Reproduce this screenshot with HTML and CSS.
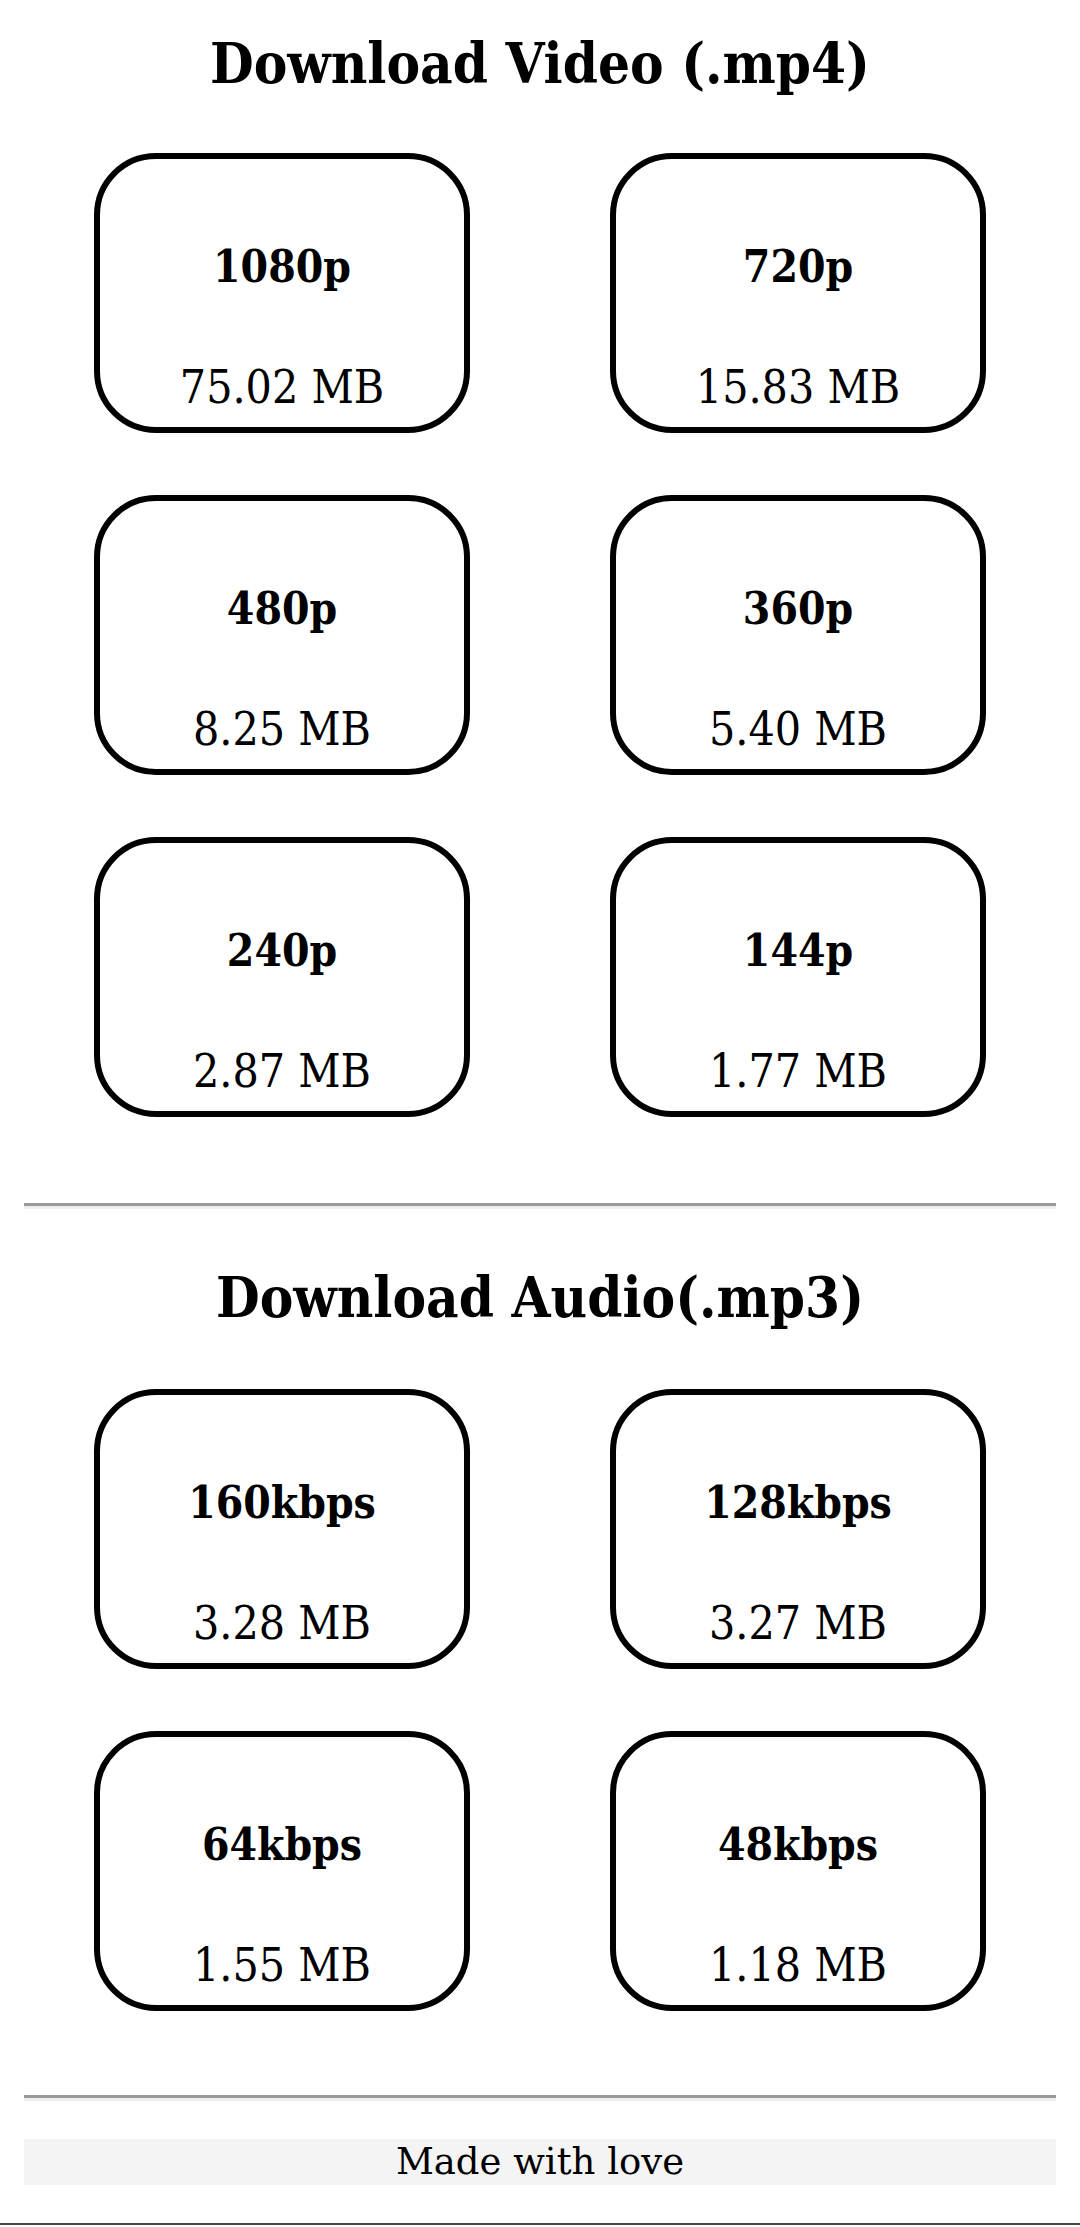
FILE: index.html
```html
<!DOCTYPE html>
<html>
<head>
<meta charset="utf-8">
<link rel="stylesheet" href="styles.css">
</head>
<body>
<section class="section section-video">
  <h2 class="title">Download Video (.mp4)</h2>
  <div class="grid">
    <div class="cell"><a class="card"><span class="label">1080p</span><span class="size">75.02 MB</span></a></div>
    <div class="cell"><a class="card"><span class="label">720p</span><span class="size">15.83 MB</span></a></div>
    <div class="cell"><a class="card"><span class="label">480p</span><span class="size">8.25 MB</span></a></div>
    <div class="cell"><a class="card"><span class="label">360p</span><span class="size">5.40 MB</span></a></div>
    <div class="cell"><a class="card"><span class="label">240p</span><span class="size">2.87 MB</span></a></div>
    <div class="cell"><a class="card"><span class="label">144p</span><span class="size">1.77 MB</span></a></div>
  </div>
</section>
<hr class="rule">
<section class="section section-audio">
  <h2 class="title">Download Audio(.mp3)</h2>
  <div class="grid">
    <div class="cell"><a class="card"><span class="label">160kbps</span><span class="size">3.28 MB</span></a></div>
    <div class="cell"><a class="card"><span class="label">128kbps</span><span class="size">3.27 MB</span></a></div>
    <div class="cell"><a class="card"><span class="label">64kbps</span><span class="size">1.55 MB</span></a></div>
    <div class="cell"><a class="card"><span class="label">48kbps</span><span class="size">1.18 MB</span></a></div>
  </div>
</section>
<hr class="rule rule-bottom">
<footer class="footer">Made with love</footer>
<div class="edge"></div>
</body>
</html>
```

FILE: styles.css
```css
html, body {
  margin: 0;
  padding: 0;
  background: #fff;
}
body {
  padding: 0 24px;
  font-family: "DejaVu Serif", serif;
  color: #000;
}
.title,
.label,
.size {
  font-family: "DejaVu Serif Condensed", "DejaVu Serif", serif;
  font-stretch: semi-condensed;
}
.title {
  margin: 0;
  font-size: 56px;
  line-height: 70px;
  font-weight: bold;
  text-align: center;
}
.section-video .title {
  padding-top: 28px;
}
.section-audio .title {
  padding-top: 53px;
}
.grid {
  display: grid;
  grid-template-columns: 1fr 1fr;
  row-gap: 62px;
  margin-top: 55px;
}
.section-audio .grid {
  margin-top: 57px;
}
.cell {
  display: flex;
  justify-content: center;
}
.card {
  box-sizing: border-box;
  width: 376px;
  height: 280px;
  border: 6px solid #000;
  border-radius: 62px;
  display: flex;
  flex-direction: column;
  align-items: center;
  padding-top: 78px;
  color: #000;
  text-decoration: none;
}
.label {
  font-weight: bold;
  font-size: 44px;
  line-height: 60px;
}
.size {
  margin-top: 60px;
  font-size: 46px;
  line-height: 60px;
}
.rule {
  margin: 86px 0 0;
  height: 0;
  border: 0;
  border-top: 3px solid #999;
  border-bottom: 3px solid #eee;
}
.rule-bottom {
  margin-top: 84px;
}
.footer {
  margin-top: 38px;
  height: 46px;
  line-height: 46px;
  background: #f4f4f4;
  text-align: center;
  font-size: 37px;
}
.edge {
  margin: 38px -24px 0;
  height: 2px;
  background: #444;
}
```
